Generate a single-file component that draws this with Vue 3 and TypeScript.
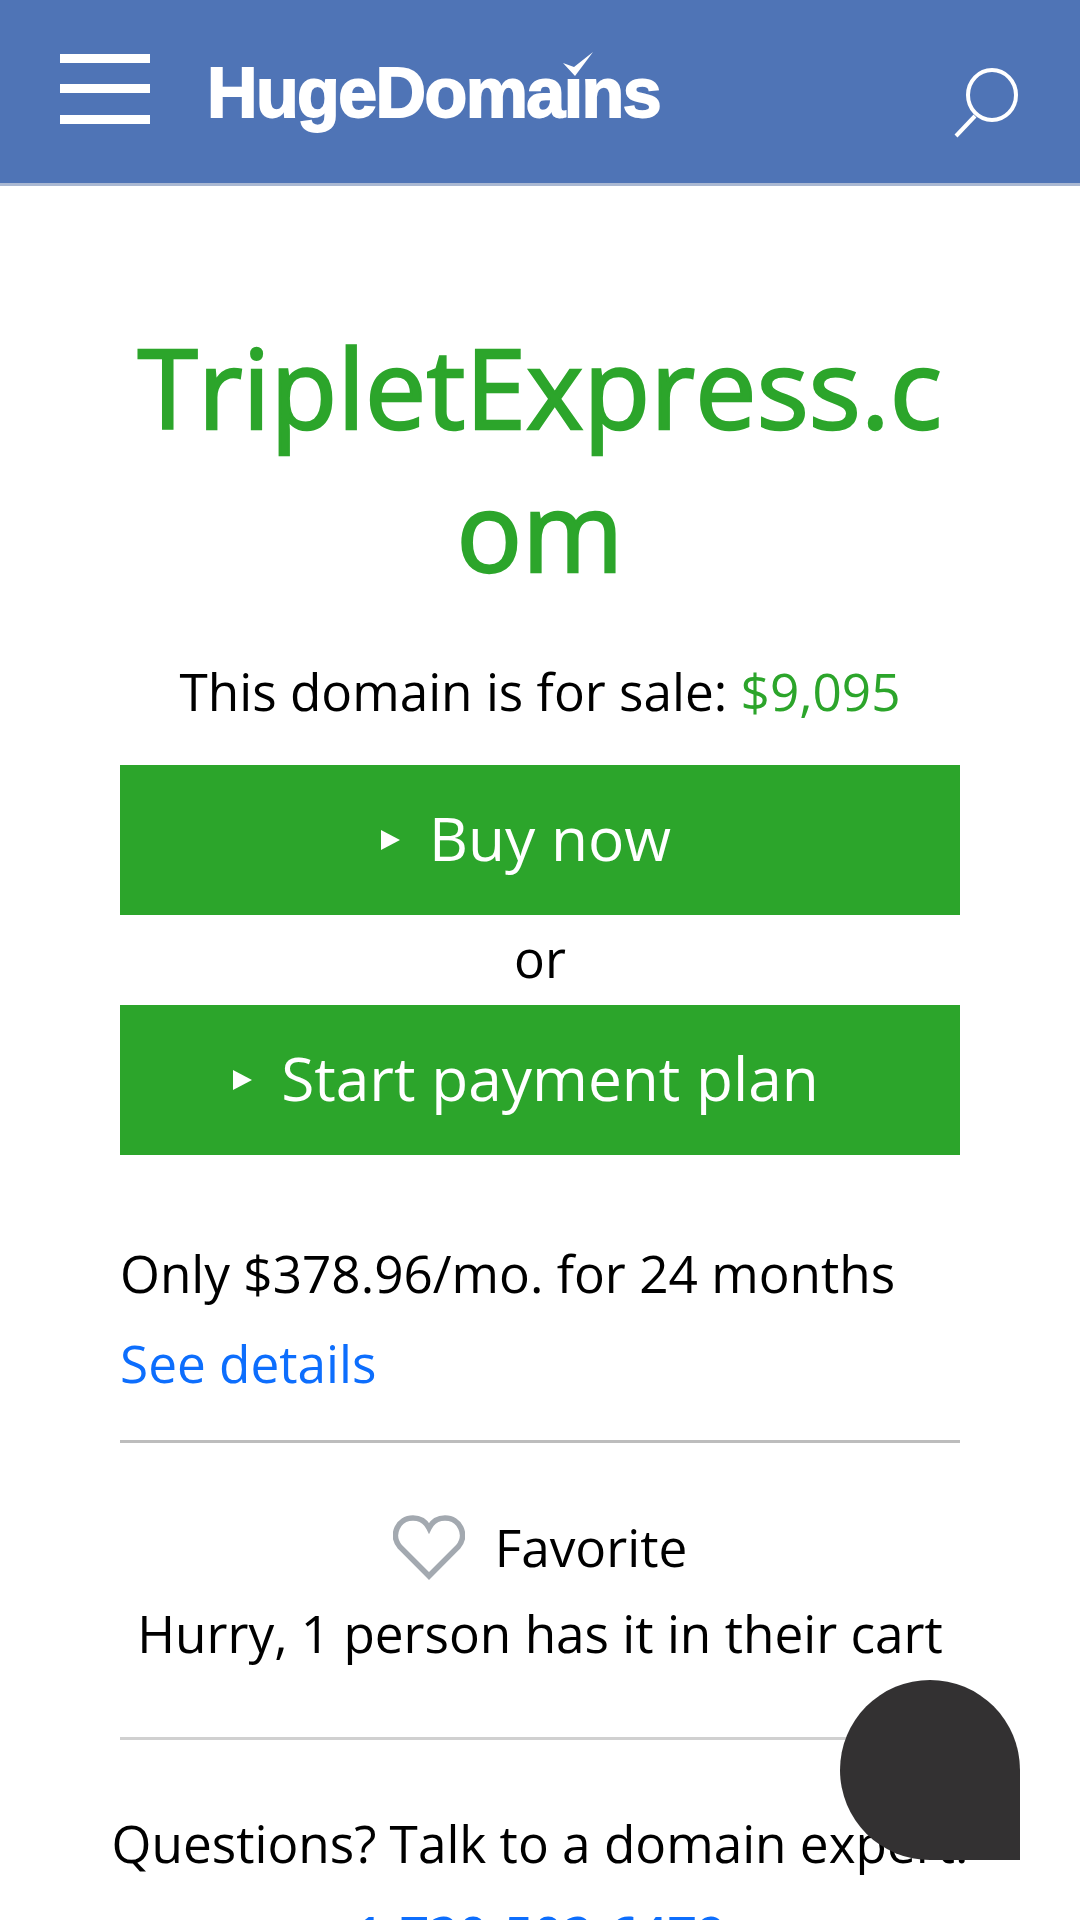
<script setup lang="ts">
</script>

<template>
  <div class="page">
    <header class="top">
      <div class="burger"><span></span><span></span><span></span></div>
      <div class="logo">
        HugeDomains
        <svg class="check" viewBox="0 0 30 26" width="30" height="26"><path d="M0 12 L12 25 L30 1 L11 16 Z" fill="#fff"/></svg>
      </div>
      <svg class="search" viewBox="0 0 66 70" width="66" height="70" fill="none" stroke="#fff">
        <ellipse cx="38" cy="27" rx="24" ry="25" stroke-width="4"/>
        <path d="M21 48 L2 68" stroke-width="4"/>
      </svg>
    </header>
    <main class="main">
      <h1 class="title">TripletExpress.com</h1>
      <p class="sale">This domain is for sale: <span class="price">$9,095</span></p>
      <a class="btn"><i class="tri"></i>Buy now</a>
      <div class="or">or</div>
      <a class="btn"><i class="tri"></i>Start payment plan</a>
      <p class="only">Only $378.96/mo. for 24 months</p>
      <a class="details">See details</a>
      <hr class="rule first" />
      <div class="fav">
        <svg viewBox="0 0 72 65" width="72" height="65" fill="none" stroke="#a3a9b0" stroke-width="5.5">
          <path d="M36 61 L7 32 C-3 20 5 3 20 3 C28 3 33 7 36 13 C39 7 44 3 52 3 C67 3 75 20 65 32 Z"/>
        </svg>
        <span>Favorite</span>
      </div>
      <p class="hurry">Hurry, 1 person has it in their cart</p>
      <hr class="rule second" />
      <p class="q">Questions? Talk to a domain expert.</p>
      <a class="phone">1-720-502-6479</a>
    </main>
    <div class="chat"></div>
  </div>
</template>

<style>
html, body { margin: 0; background: #fff; }
</style>

<style scoped>
.page {
  position: relative;
  width: 1080px;
  height: 1920px;
  overflow: hidden;
  background: #fff;
  font-family: "Open Sans", sans-serif;
  color: #000;
}
.top {
  height: 183px;
  background: #4f74b6;
  border-bottom: 3px solid #aab8d2;
  display: flex;
  align-items: center;
  padding: 0 60px;
  position: relative;
}
.burger {
  width: 90px;
  height: 70px;
  display: flex;
  flex-direction: column;
  justify-content: space-between;
  margin-top: -6px;
}
.burger span { height: 9px; background: #fff; display: block; }
.logo {
  position: relative;
  margin-left: 57px;
  font-family: "Liberation Sans", sans-serif;
  font-weight: 700;
  font-size: 70px;
  letter-spacing: -1.6px;
  color: #fff;
  -webkit-text-stroke: 1.8px #fff;
  line-height: 1;
  margin-top: 3px;
}
.check {
  position: absolute;
  left: 356px;
  top: -7px;
  background: #4f74b6;
}
.search { margin-left: auto; margin-top: 22px; }
.main {
  padding: 0 120px;
  display: flex;
  flex-direction: column;
  align-items: stretch;
}
.title {
  margin: 129px 0 0;
  font-size: 109px;
  font-weight: 500;
  letter-spacing: 0.2px;
  -webkit-text-stroke: 2.4px #2ca52b;
  line-height: 143px;
  text-align: center;
  word-break: break-all;
  color: #2ca52b;
}
.sale {
  margin: 56px 0 0;
  text-align: center;
  font-size: 51.3px;
  line-height: 68px;
  white-space: nowrap;
}
.price { color: #2ca52b; }
.btn {
  height: 145px;
  background: #2ca52b;
  color: #fff;
  font-size: 60.4px;
  display: flex;
  align-items: center;
  justify-content: center;
  padding-right: 28px;
  padding-bottom: 5px;
}
.sale + .btn { margin-top: 40px; }
.tri {
  width: 0;
  height: 0;
  border-left: 19px solid #fff;
  border-top: 10.5px solid transparent;
  border-bottom: 10.5px solid transparent;
  margin-right: 29px;
  margin-top: 5px;
}
.or {
  text-align: center;
  font-size: 51.3px;
  height: 90px;
  line-height: 86px;
}
.only {
  margin: 84px 0 0;
  font-size: 51.3px;
  line-height: 68px;
  white-space: nowrap;
}
.details {
  margin-top: 22px;
  font-size: 51.3px;
  line-height: 68px;
  color: #0d6efd;
}
.rule {
  margin: 0;
  border: 0;
  height: 3px;
  background: #bdbdbd;
}
.rule.first { margin-top: 43px; }
.rule.second { margin-top: 70px; background: #d0d0d0; }
.fav {
  margin-top: 70px;
  display: flex;
  align-items: center;
  justify-content: center;
  gap: 30px;
  font-size: 51.3px;
  height: 68px;
}
.hurry {
  margin: 18px 0 0;
  text-align: center;
  font-size: 51.3px;
  line-height: 68px;
  white-space: nowrap;
}
.q {
  margin: 69px -20px 0;
  text-align: center;
  font-size: 51.3px;
  line-height: 68px;
  white-space: nowrap;
}
.phone {
  margin-top: 22px;
  text-align: center;
  font-size: 51.3px;
  font-weight: 600;
  line-height: 68px;
  color: #0d6efd;
}
.chat {
  position: absolute;
  left: 840px;
  top: 1680px;
  width: 180px;
  height: 180px;
  background: #333132;
  border-radius: 50% 50% 0 50%;
}
</style>
